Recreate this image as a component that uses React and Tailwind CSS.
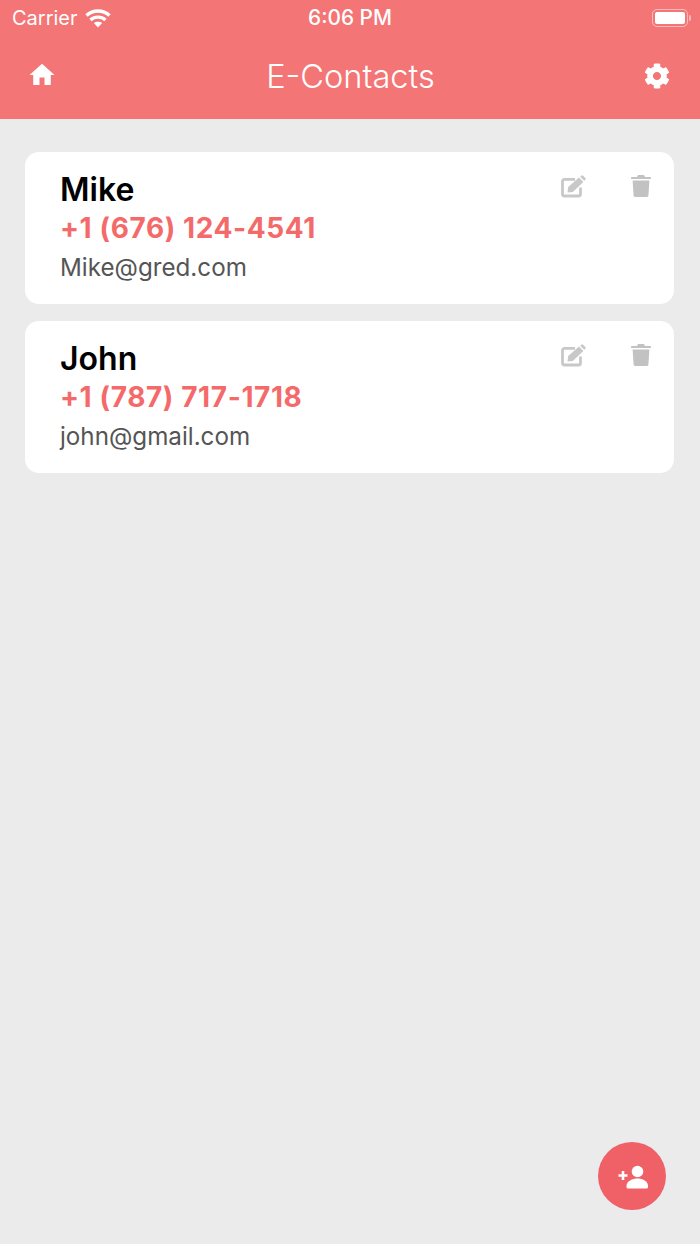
import { FaCog } from 'react-icons/fa';
import { MdHome } from 'react-icons/md';

const contactos = [
  { id: 1, nombre: 'Mike', telefono: '+1 (676) 124-4541', correo: 'Mike@gred.com' },
  { id: 2, nombre: 'John', telefono: '+1 (787) 717-1718', correo: 'john@gmail.com' },
];

function Wifi() {
  return (
    <svg width="26" height="19" viewBox="0 0 26 19" fill="none" stroke="white" strokeWidth="3.4">
      <path d="M1.5 6.5C8 .5 18 .5 24.5 6.5" />
      <path d="M5.5 11C9.8 7.2 16.2 7.2 20.5 11" />
      <path d="M13 18.5l-4.2-4.4c2.2-1.8 6.2-1.8 8.4 0z" fill="white" stroke="none" />
    </svg>
  );
}

function Bateria() {
  return (
    <div className="flex items-center gap-[1px]">
      <div className="w-[36px] h-[18px] rounded-[5px] border border-white/50 p-[2px]">
        <div className="w-full h-full rounded-[2px] bg-white" />
      </div>
      <div className="w-[2px] h-[6px] rounded-r-sm bg-white/50" />
    </div>
  );
}

function IconoEditar() {
  return (
    <svg width="25" height="23" viewBox="0 0 25 23" fill="none">
      <path
        d="M14 4.3H3.5a2 2 0 0 0-2 2V19a2 2 0 0 0 2 2H17.5a2 2 0 0 0 2-2V12.5"
        stroke="#c8c8c8"
        strokeWidth="2.8"
      />
      <path d="M6.500 17.500 7.200 12 18 2.600 22.400 7 11.800 17Z" fill="#c8c8c8" />
      <path d="M19.2 1.8 20.6.6a1 1 0 0 1 1.3 0l2.6 2.6a1 1 0 0 1 0 1.3L23.2 5.8Z" fill="#c8c8c8" />
    </svg>
  );
}

function IconoBorrar() {
  return (
    <svg width="20" height="22" viewBox="0 0 20 22" fill="#c2c2c2">
      <path d="M7 0h6l1 2h5a1 1 0 0 1 1 1v1H0V3a1 1 0 0 1 1-1h5z" />
      <path d="M1.6 5.6H18.4L17.4 20.6a1.4 1.4 0 0 1-1.4 1.4H4a1.4 1.4 0 0 1-1.4-1.4z" />
    </svg>
  );
}

function IconoPersona() {
  return (
    <svg width="30" height="24" viewBox="0 0 30 24" fill="white">
      <circle cx="19.5" cy="6.5" r="5.8" />
      <path d="M8.5 21c0-5 6-7.5 11-7.5s10.500 2.500 10.500 7.500v1a1.500 1.500 0 0 1-1.500 1.500H10a1.500 1.500 0 0 1-1.500-1.500z" />
      <path d="M3.700 6h2.600v3.200h3.200v2.600H6.300V15H3.700v-3.200H.500V9.200h3.200z" />
    </svg>
  );
}

function Tarjeta({ contacto }) {
  return (
    <div className="relative h-[152px] rounded-[14px] bg-white pl-[35px] pt-[18px]">
      <div className="text-[32px] leading-[40px] font-semibold text-black">{contacto.nombre}</div>
      <div className="text-[28px] leading-[36px] font-bold tracking-[0.6px] text-[#f46a6a]">{contacto.telefono}</div>
      <div className="mt-[2px] text-[24.200px] leading-[40px] text-[#555555]">{contacto.correo}</div>
      <div className="absolute top-[23px] right-[23px] flex items-start gap-[45px]">
        <IconoEditar />
        <IconoBorrar />
      </div>
    </div>
  );
}

export default function App() {
  return (
    <div className="relative flex flex-col h-[1244px] w-[700px] bg-[#ebebeb] font-['Inter',sans-serif]">
      {/* Cabecera */}
      <div className="h-[119px] bg-[#f47575] text-white">
        <div className="grid grid-cols-3 items-center h-[36px] px-[9px]">
          <div className="flex items-center gap-[7px] pl-[3px]">
            <span className="text-[20px]">Carrier</span>
            <Wifi />
          </div>
          <span className="text-center text-[20.800px] font-medium">6:06 PM</span>
          <div className="flex justify-end">
            <Bateria />
          </div>
        </div>
        <div className="flex items-center justify-between h-[80px] pl-[27px] pr-[30px]">
          <MdHome size={30} className="-mt-[2px]" />
          <span className="text-[32.600px] font-light">E-Contacts</span>
          <FaCog size={26} />
        </div>
      </div>

      {/* Lista de contactos */}
      <div className="flex flex-col gap-[17px] pl-[25px] pr-[26px] pt-[33px]">
        {contactos.map((contacto) => (
          <Tarjeta key={contacto.id} contacto={contacto} />
        ))}
      </div>

      {/* Boton añadir */}
      <div className="absolute left-[598px] top-[1142px] flex items-center justify-center w-[68px] h-[68px] rounded-full bg-[#f06067]">
        <div className="ml-[2px] mt-[2px]">
          <IconoPersona />
        </div>
      </div>
    </div>
  );
}
